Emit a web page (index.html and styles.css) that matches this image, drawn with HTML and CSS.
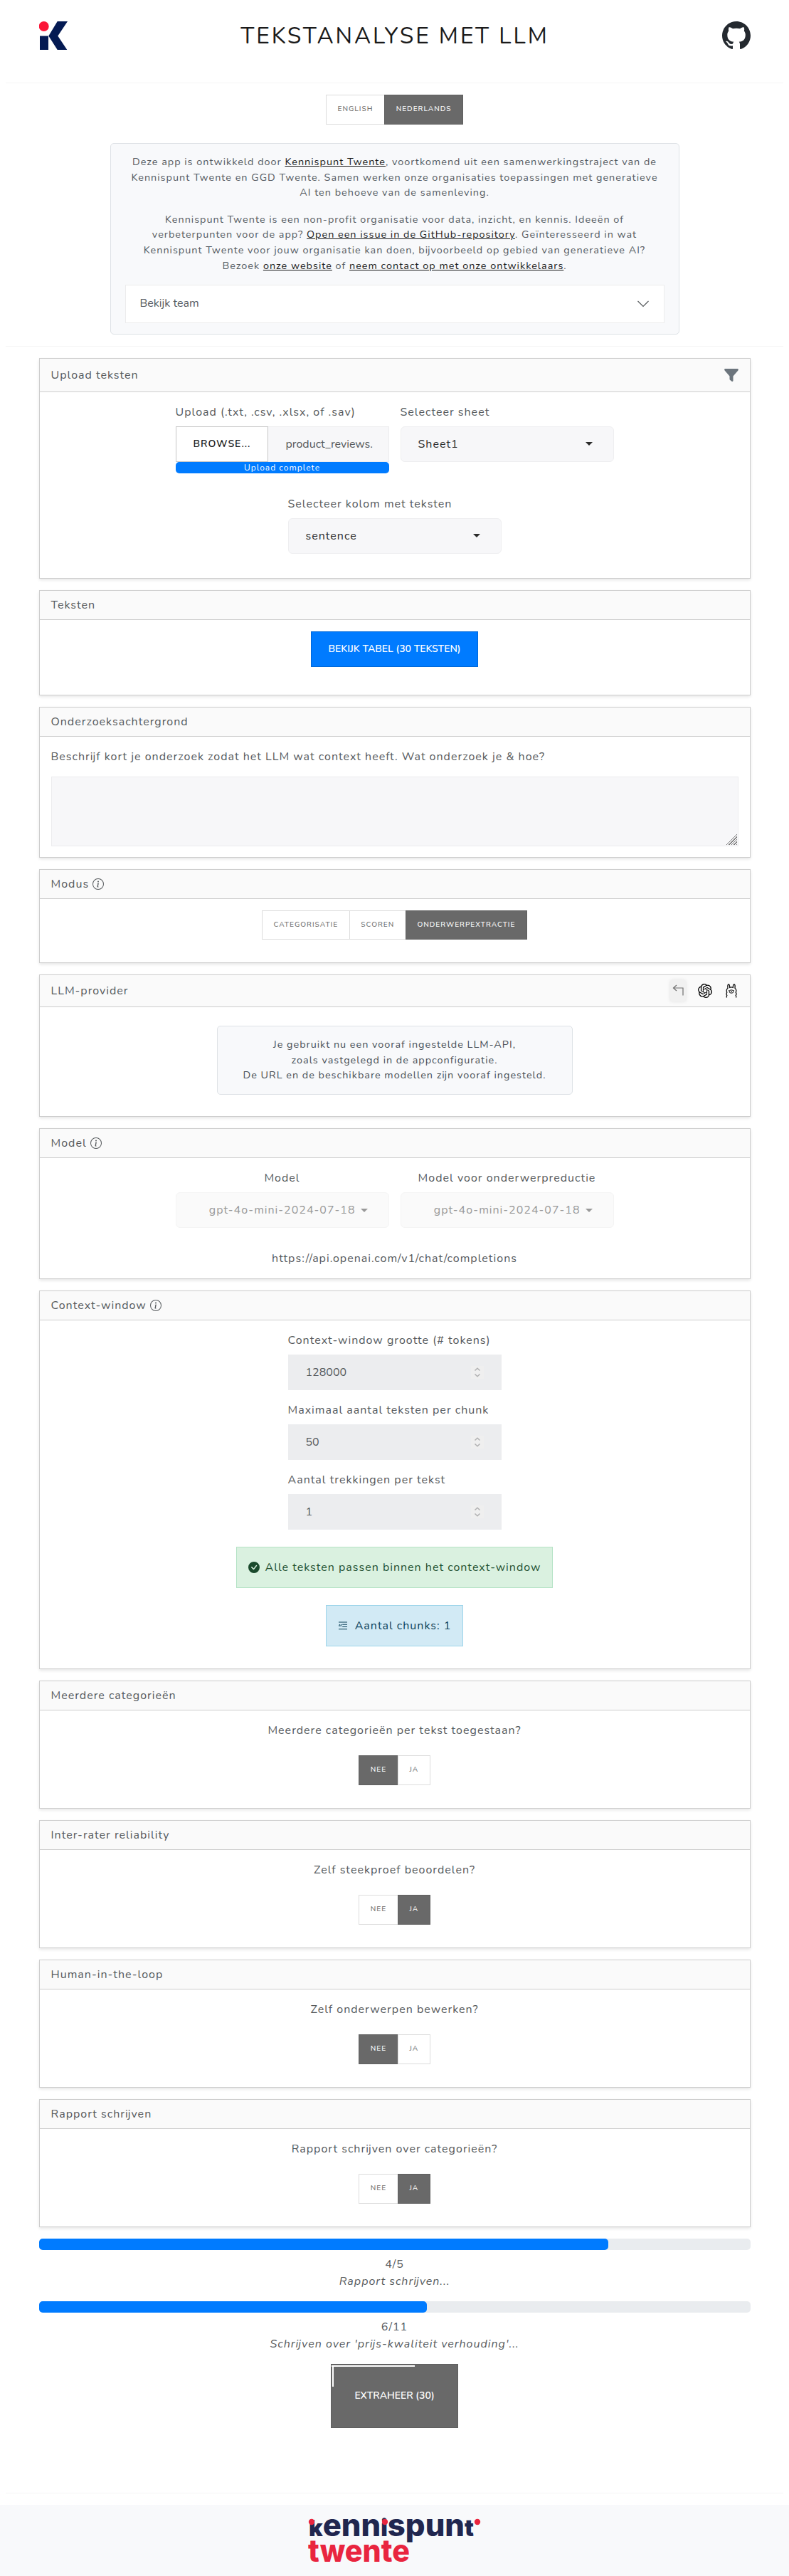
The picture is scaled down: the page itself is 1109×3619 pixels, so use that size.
FILE: index.html
```html
<!DOCTYPE html>
<html lang="nl">
<head>
<meta charset="utf-8">
<title>Tekstanalyse met LLM</title>
<link rel="stylesheet" href="styles.css">
</head>
<body>
<svg width="0" height="0" class="defs">
  <symbol id="info" viewBox="0 0 16 16"><path d="M8 15A7 7 0 1 1 8 1a7 7 0 0 1 0 14m0 1A8 8 0 1 0 8 0a8 8 0 0 0 0 16"/><path d="m8.93 6.588-2.29.287-.082.38.45.083c.294.07.352.176.288.469l-.738 3.468c-.194.897.105 1.319.808 1.319.545 0 1.178-.252 1.465-.598l.088-.416c-.2.176-.492.246-.686.246-.275 0-.375-.193-.304-.533zM9 4.5a1 1 0 1 1-2 0 1 1 0 0 1 2 0"/></symbol>
  <symbol id="spin" viewBox="0 0 18 18"><rect width="18" height="18" fill="#efefef"/><path d="M5.500 6.500 9 3.200l3.500 3.300M5.500 11.500l3.500 3.300 3.500-3.300" fill="none" stroke="#b0b0b1" stroke-width="1.500"/></symbol>
</svg>

<header class="top">
  <svg class="logo" viewBox="0 0 40 40"><circle cx="6.700" cy="7" r="7" fill="#fb1638"/><path d="M1 20.500h12V40H1zM13.300 20.500 25.700 0H40L26.300 20.500 39.300 40H25.700z" fill="#041a53"/></svg>
  <h1>Tekstanalyse met LLM</h1>
  <svg class="github" viewBox="0 0 16 16"><path fill="#24292f" d="M8 0C3.58 0 0 3.58 0 8c0 3.54 2.29 6.53 5.47 7.59.4.07.55-.17.55-.38 0-.19-.01-.82-.01-1.49-2.01.37-2.53-.49-2.69-.94-.09-.23-.48-.94-.82-1.13-.28-.15-.68-.52-.01-.53.63-.01 1.08.58 1.23.82.72 1.21 1.87.87 2.33.66.07-.52.28-.87.51-1.07-1.78-.2-3.64-.89-3.64-3.95 0-.87.31-1.59.82-2.15-.08-.2-.36-1.02.08-2.12 0 0 .67-.21 2.2.82.64-.18 1.32-.27 2-.27s1.36.09 2 .27c1.53-1.04 2.2-.82 2.2-.82.44 1.1.16 1.92.08 2.12.51.56.82 1.27.82 2.15 0 3.07-1.87 3.75-3.65 3.95.29.25.54.73.54 1.48 0 1.07-.01 1.93-.01 2.2 0 .21.15.46.55.38A8.01 8.01 0 0 0 16 8c0-4.42-3.58-8-8-8"/></svg>
</header>
<hr>
<div class="toggle lang"><span>English</span><span class="on">Nederlands</span></div>

<section class="intro">
  <p>Deze app is ontwikkeld door <a>Kennispunt Twente</a>, voortkomend uit een samenwerkingstraject van de Kennispunt Twente en GGD Twente. Samen werken onze organisaties toepassingen met generatieve AI ten behoeve van de samenleving.</p>
  <p>Kennispunt Twente is een non-profit organisatie voor data, inzicht, en kennis. Ideeën of verbeterpunten voor de app? <a>Open een issue in de GitHub-repository</a>. Geïnteresseerd in wat Kennispunt Twente voor jouw organisatie kan doen, bijvoorbeeld op gebied van generatieve AI? Bezoek <a>onze website</a> of <a>neem contact op met onze ontwikkelaars</a>.</p>
  <div class="accordion"><span>Bekijk team</span><svg width="18" height="18" viewBox="0 0 18 18"><path d="M1.500 5 9 12.500 16.500 5" fill="none" stroke="#55595c" stroke-width="1.200"/></svg></div>
</section>
<hr>

<main>
  <section class="card upload">
    <h2>Upload teksten<svg class="filter" viewBox="0 0 20 20"><path d="M1 1h18q1.500 1 .4 2.400L12.500 11.500V18q-.6 1.500-2 .7L8 16.700q-.5-.5-.5-1.200v-4L.6 3.400Q-.5 2 1 1z" fill="#6c757d"/></svg></h2>
    <div class="body">
      <div class="pair">
        <div class="field"><label>Upload (.txt, .csv, .xlsx, of .sav)</label>
          <div class="file"><span class="browse">Browse...</span><span class="name">product_reviews.</span></div>
          <div class="done">Upload complete</div></div>
        <div class="field"><label>Selecteer sheet</label><div class="select">Sheet1<i></i></div></div>
      </div>
      <div class="field"><label>Selecteer kolom met teksten</label><div class="select">sentence<i></i></div></div>
    </div>
  </section>

  <section class="card texts">
    <h2>Teksten</h2>
    <div class="body"><div class="btn-blue">Bekijk tabel (30 teksten)</div></div>
  </section>

  <section class="card background">
    <h2>Onderzoeksachtergrond</h2>
    <div class="body"><label>Beschrijf kort je onderzoek zodat het LLM wat context heeft. Wat onderzoek je &amp; hoe?</label><textarea></textarea></div>
  </section>

  <section class="card mode">
    <h2>Modus <svg class="info"><use href="#info"/></svg></h2>
    <div class="body"><div class="toggle"><span>Categorisatie</span><span>Scoren</span><span class="on">Onderwerpextractie</span></div></div>
  </section>

  <section class="card provider">
    <h2>LLM-provider
      <span class="icons">
        <span class="back"><svg width="18" height="18" viewBox="0 0 18 18"><path d="M7 2 2.500 6 7 10M2.500 6H16v10.500" fill="none" stroke="#6e6e6e" stroke-width="1.200"/></svg></span>
        <svg width="20" height="20" viewBox="0 0 24 24"><path d="M22.2819 9.8211a5.9847 5.9847 0 0 0-.5157-4.9108 6.0462 6.0462 0 0 0-6.5098-2.9A6.0651 6.0651 0 0 0 4.9807 4.1818a5.9847 5.9847 0 0 0-3.9977 2.9 6.0462 6.0462 0 0 0 .7427 7.0966 5.98 5.98 0 0 0 .511 4.9107 6.051 6.051 0 0 0 6.5146 2.9001A5.9847 5.9847 0 0 0 13.2599 24a6.0557 6.0557 0 0 0 5.7718-4.2058 5.9894 5.9894 0 0 0 3.9977-2.9001 6.0557 6.0557 0 0 0-.7475-7.0729zm-9.022 12.6081a4.4755 4.4755 0 0 1-2.8764-1.0408l.1419-.0804 4.7783-2.7582a.7948.7948 0 0 0 .3927-.6813v-6.7369l2.02 1.1686a.071.071 0 0 1 .038.052v5.5826a4.504 4.504 0 0 1-4.4945 4.4944zm-9.6607-4.1254a4.4708 4.4708 0 0 1-.5346-3.0137l.142.0852 4.783 2.7582a.7712.7712 0 0 0 .7806 0l5.8428-3.3685v2.3324a.0804.0804 0 0 1-.0332.0615L9.74 19.9502a4.4992 4.4992 0 0 1-6.1408-1.6464zM2.3408 7.8956a4.485 4.485 0 0 1 2.3655-1.9728V11.6a.7664.7664 0 0 0 .3879.6765l5.8144 3.3543-2.0201 1.1685a.0757.0757 0 0 1-.071 0l-4.8303-2.7865A4.504 4.504 0 0 1 2.3408 7.872zm16.5963 3.8558L13.1038 8.364 15.1192 7.2a.0757.0757 0 0 1 .071 0l4.8303 2.7913a4.4944 4.4944 0 0 1-.6765 8.1042v-5.6772a.79.79 0 0 0-.407-.667zm2.0107-3.0231l-.142-.0852-4.7735-2.7818a.7759.7759 0 0 0-.7854 0L9.409 9.2297V6.8974a.0662.0662 0 0 1 .0284-.0615l4.8303-2.7866a4.4992 4.4992 0 0 1 6.6802 4.66zM8.3065 12.863l-2.02-1.1638a.0804.0804 0 0 1-.038-.0567V6.0742a4.4992 4.4992 0 0 1 7.3757-3.4537l-.142.0805L8.704 5.459a.7948.7948 0 0 0-.3927.6813zm1.0976-2.3654l2.602-1.4998 2.6069 1.4998v2.9994l-2.5974 1.4997-2.6067-1.4997Z"/></svg>
        <svg class="llama" width="16" height="20" viewBox="0 0 16 20" fill="none" stroke="#111" stroke-width="1.300"><path d="M1.500 19.500q-.6-1.500.3-3-1.500-2 0-4.300-1.700-3.700 1.200-5.900Q2.400 1 4 1t1.700 4.300q2.300-1 4.600 0Q10.400 1 12 1t1 5.300q2.900 2.200 1.200 5.900 1.500 2.300 0 4.300.9 1.500.3 3"/><ellipse cx="8" cy="11" rx="3" ry="2.200" stroke-width="1"/><path d="M7.300 10.500h1.400M8 10.500v1.200M4 9.500h.8M11.200 9.500h.8" stroke-width="1.100"/></svg>
      </span>
    </h2>
    <div class="body"><p class="notice">Je gebruikt nu een vooraf ingestelde LLM-API,<br>zoals vastgelegd in de appconfiguratie.<br>De URL en de beschikbare modellen zijn vooraf ingesteld.</p></div>
  </section>

  <section class="card model">
    <h2>Model <svg class="info"><use href="#info"/></svg></h2>
    <div class="body">
      <div class="pair">
        <div class="field mid"><label>Model</label><div class="select off">gpt-4o-mini-2024-07-18<i></i></div></div>
        <div class="field mid"><label>Model voor onderwerpreductie</label><div class="select off">gpt-4o-mini-2024-07-18<i></i></div></div>
      </div>
      <div class="url">https://api.openai.com/v1/chat/completions</div>
    </div>
  </section>

  <section class="card context">
    <h2>Context-window <svg class="info"><use href="#info"/></svg></h2>
    <div class="body">
      <div class="field"><label>Context-window grootte (# tokens)</label><div class="number">128000<svg><use href="#spin"/></svg></div></div>
      <div class="field"><label>Maximaal aantal teksten per chunk</label><div class="number">50<svg><use href="#spin"/></svg></div></div>
      <div class="field"><label>Aantal trekkingen per tekst</label><div class="number">1<svg><use href="#spin"/></svg></div></div>
      <div class="alert green"><svg width="16" height="16" viewBox="0 0 16 16"><path d="M16 8A8 8 0 1 1 0 8a8 8 0 0 1 16 0m-3.970-3.030a.75.75 0 0 0-1.080.022L7.477 9.417 5.384 7.323a.75.75 0 0 0-1.060 1.060L6.970 11.030a.75.75 0 0 0 1.079-.020l3.992-4.990a.75.75 0 0 0-.010-1.050z"/></svg>Alle teksten passen binnen het context-window</div>
      <div class="alert blue"><svg width="14" height="14" viewBox="0 0 14 14" fill="none" stroke="#0c4159" stroke-width="1.100"><path d="M1 2h12M6.200 5.300H13M6.200 8.500H13M1 11.700h12M3 5.200q-1.300.5-1.200 2h.9M5.200 5.200q-1.300.5-1.200 2h.9"/></svg>Aantal chunks: 1</div>
    </div>
  </section>

  <section class="card ask"><h2>Meerdere categorieën</h2><div class="body"><label>Meerdere categorieën per tekst toegestaan?</label><div class="toggle"><span class="on">Nee</span><span>Ja</span></div></div></section>
  <section class="card ask"><h2>Inter-rater reliability</h2><div class="body"><label>Zelf steekproef beoordelen?</label><div class="toggle"><span>Nee</span><span class="on">Ja</span></div></div></section>
  <section class="card ask"><h2>Human-in-the-loop</h2><div class="body"><label>Zelf onderwerpen bewerken?</label><div class="toggle"><span class="on">Nee</span><span>Ja</span></div></div></section>
  <section class="card ask"><h2>Rapport schrijven</h2><div class="body"><label>Rapport schrijven over categorieën?</label><div class="toggle"><span>Nee</span><span class="on">Ja</span></div></div></section>

  <div class="progress"><div class="bar"><div style="width:80%"></div></div><p>4/5</p><p><em>Rapport schrijven...</em></p></div>
  <div class="progress"><div class="bar"><div style="width:54.5%"></div></div><p>6/11</p><p><em>Schrijven over 'prijs-kwaliteit verhouding'...</em></p></div>
  <div class="run">Extraheer (30)</div>
</main>
<hr>
<footer>
  <svg width="250" height="100" viewBox="0 0 250 100" class="wordmark">
    <text x="1" y="44" textLength="232" lengthAdjust="spacingAndGlyphs" fill="#20264f"><tspan class="low">k</tspan>enn<tspan class="low">i</tspan>spun<tspan class="low">t</tspan></text>
    <text x="0" y="80" textLength="143" lengthAdjust="spacingAndGlyphs" fill="#e9253f">twente</text>
    <circle cx="5" cy="24" r="4.200" fill="#e9253f"/><circle cx="108" cy="24" r="4.200" fill="#e9253f"/><circle cx="238" cy="24" r="4.200" fill="#e9253f"/>
  </svg>
</footer>
</body>
</html>
```
FILE: styles.css
```css
* { box-sizing: border-box; }
body { margin: 0; background: #fff; color: #55595c; font: 16px/24px Nunito, Lato, sans-serif; letter-spacing: 1px; }
p, h1, h2 { margin: 0; font-weight: 400; }
label { display: block; }
hr { margin: 0 8px; border: 0; height: 1px; background: #f5f5f5; }
.defs { display: block; }

.top { display: flex; justify-content: space-between; align-items: flex-start; height: 116px; padding: 30px 54px 0 55px; }
.logo { width: 40px; height: 40px; }
.github { width: 40px; height: 40px; }
h1 { color: #1a1a1a; font-size: 31.7px; line-height: 42px; letter-spacing: 3px; text-transform: uppercase; }

.toggle { display: flex; width: max-content; margin: 0 auto; font-size: 10.15px; font-weight: 500; line-height: 15.6px; text-transform: uppercase; color: #707070; }
.toggle span { padding: 12px 15.600px; border: 1px solid #dcdcdc; }
.toggle span + span { margin-left: -1px; }
.toggle .on { background: #696969; border-color: #606060; color: #fff; }
.lang { margin: 16px auto 26.400px; }

.intro { width: 800px; height: 269px; margin: 0 auto 16px; padding: 15px 20px; border: 1px solid #dee2e6; border-radius: 5px; background: #f8f9fb; font-size: 14.4px; line-height: 21.6px; text-align: center; color: #555b62; }
.intro p { margin-bottom: 16px; }
.intro a { color: #1a1a1a; text-decoration: underline; }
.accordion { display: flex; justify-content: space-between; align-items: center; height: 54px; padding: 0 20px; border: 1px solid #ececec; background: #fff; font-size: 16px; letter-spacing: 0; }

main { width: 1000px; margin: 15.700px auto 0; }
.card { margin-bottom: 16px; border: 1px solid #cdcdcd; background: #fff; box-shadow: 0 2px 4px rgba(0,0,0,.1); }
.card h2 { display: flex; align-items: center; height: 41px; padding: 0 16px; border-bottom: 1px solid #cdcdcd; background: #fafafa; font-size: 16px; line-height: 24px; }
.body { display: flex; flex-direction: column; align-items: center; padding: 16px; }
.info { width: 16px; height: 16px; margin-left: 5px; fill: currentColor; }

.upload { height: 310.400px; }
.upload h2 { height: 47px; }
.filter { width: 20px; height: 20px; margin-left: auto; }
.pair { display: flex; gap: 16px; }
.field { width: 300px; }
.field label { margin-bottom: 8px; }
.mid label { text-align: center; }
.file { display: flex; height: 50px; line-height: 48px; }
.browse { width: 130px; padding-left: 24px; border: 1px solid #c6c6c6; background: #fff; color: #1a1a1a; font-size: 14px; font-weight: 600; text-transform: uppercase; }
.name { flex: 1; padding-left: 25px; border: 1px solid #ececee; border-left: 0; background: #f7f7f9; letter-spacing: 0; }
.done { height: 16px; border-radius: 5px; background: #007bff; color: #fff; font-size: 12px; line-height: 16px; text-align: center; }
.upload .pair { margin-bottom: 31px; }
.select { display: flex; align-items: center; justify-content: space-between; height: 50px; padding: 0 29px 0 24px; border: 1px solid #eeeef0; border-radius: 6px; background: #f7f7f9; color: #2b2b2b; }
.select i { border: 5px solid transparent; border-top-color: currentColor; border-bottom: 0; }
.select.off { justify-content: flex-end; gap: 7px; color: #999; background: #fafafa; border-color: #f4f4f4; }

.texts { height: 148px; }
.btn-blue { width: 235px; height: 50px; border: 1px solid #0068d9; background: #007bff; color: #fff; font-size: 14px; font-weight: 600; line-height: 48px; letter-spacing: 0; text-align: center; text-transform: uppercase; }

.background { height: 211.800px; }
.background .body { align-items: stretch; gap: 16px; }
textarea { display: block; height: 98px; resize: none; border: 1px solid #ececee; outline: 0; background: linear-gradient(135deg, #f7f7f9 50%, transparent 50%) right 1px bottom 1px / 15px 15px no-repeat, repeating-linear-gradient(135deg, #777 0 1px, #f7f7f9 1px 2.5px) right 1px bottom 1px / 15px 15px no-repeat, #f7f7f9; }

.mode { height: 132.400px; }
.provider { height: 199.800px; }
.provider h2 { height: 45px; }
.icons { display: flex; align-items: center; gap: 17px; margin-left: auto; margin-right: 2px; }
.back { display: flex; justify-content: center; width: 22px; height: 30px; padding-top: 5px; background: #f1f1f1; border-radius: 3px; box-shadow: 0 0 5px rgba(0,0,0,.1); }
.llama { margin-left: 2px; }
.notice { width: 500px; height: 97px; margin-top: 10px; padding-top: 15px; border: 1px solid #dee2e6; border-radius: 5px; background: #f8f9fb; font-size: 14.4px; line-height: 21.6px; text-align: center; color: #495057; }

.model { height: 212px; }
.url { margin-top: 31px; }

.context { height: 532.300px; }
.context .field { margin-bottom: 16px; }
.number { display: flex; align-items: center; justify-content: space-between; height: 50px; padding: 0 25px; background: #ecedef; letter-spacing: 0; }
.number svg { width: 18px; height: 18px; }
.alert { display: flex; align-items: center; height: 58px; padding: 0 16px; border: 1px solid; }
.green { margin: 8px 0 24px; gap: 8px; border-color: #b4e3c5; background: #daf1e0; color: #1f5030; fill: #1a4a2c; }
.blue { gap: 10px; border-color: #9fd6ea; background: #d2eaf5; color: #0c4159; }

.ask { height: 180px; }
.ask label { margin-bottom: 23px; }

.progress { height: 88px; text-align: center; }
.bar { height: 16px; margin-bottom: 8px; border-radius: 5px; background: #e9ecef; }
.bar div { height: 16px; border-radius: 5px; background: #007bff; }
.run { width: 179px; height: 90px; margin: 0 auto 91px; border: 1px solid #606060; background: linear-gradient(#fff, #fff) 0 1px / 117px 2px no-repeat, linear-gradient(#fff, #fff) 1px 1px / 2px 30px no-repeat, #696969; color: #fff; font-size: 14px; font-weight: 600; line-height: 88px; letter-spacing: 0; text-align: center; text-transform: uppercase; }

footer { display: flex; height: 100px; margin-top: 16px; padding-left: 433px; background: #f8f9fb; }
.wordmark { font: 800 43px Inter, sans-serif; letter-spacing: 0; }
.low { font-size: 32px; font-weight: 900; }
```
